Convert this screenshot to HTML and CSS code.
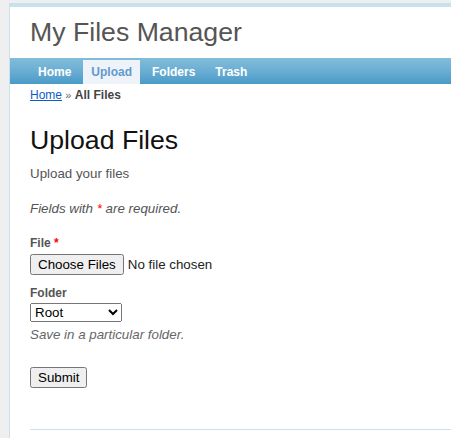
FILE: index.html
```html
<!DOCTYPE html>
<html lang="en">
<head>
<meta charset="utf-8">
<title>My Files Manager - Upload Files</title>
<link rel="stylesheet" href="styles.css">
</head>
<body>
<div class="page">
  <header class="header">
    <div class="logo">My Files Manager</div>
  </header>
  <nav class="mainmenu">
    <ul>
      <li><a href="#">Home</a></li>
      <li class="active"><a href="#">Upload</a></li>
      <li><a href="#">Folders</a></li>
      <li><a href="#">Trash</a></li>
    </ul>
  </nav>
  <div class="breadcrumbs"><a href="#">Home</a> <span class="sep">&raquo;</span> <span class="current">All Files</span></div>
  <main class="content">
    <h1>Upload Files</h1>
    <p class="intro">Upload your files</p>
    <form class="form" action="#" onsubmit="return false;">
      <p class="note">Fields with <span class="required">*</span> are required.</p>
      <div class="row">
        <label class="field-label" for="files">File <span class="required">*</span></label>
        <input class="file-input" id="files" type="file" multiple>
      </div>
      <div class="row row-folder">
        <label class="field-label" for="folder">Folder</label>
        <select class="folder-select" id="folder">
          <option>Root</option>
        </select>
        <div class="hint">Save in a particular folder.</div>
      </div>
      <div class="row buttons">
        <input class="submit-btn" type="submit" value="Submit">
      </div>
    </form>
  </main>
  <footer class="footer"></footer>
</div>
</body>
</html>
```

FILE: styles.css
```css
html, body {
  margin: 0;
  padding: 0;
}

body {
  background: #efefef;
  color: #555;
  font-family: "Liberation Sans", Arial, Helvetica, sans-serif;
  font-size: 13.333px;
  overflow: hidden;
}

.page {
  margin: 3px 0 0 9px;
  background: #fff;
  border-top: 1px solid #c9e0ed;
  border-left: 1px solid #c9e0ed;
}

.header {
  border-top: 3px solid #c9e0ed;
}

.logo {
  padding: 10px 20px;
  font-size: 26.667px;
  line-height: 31px;
  color: #555;
}

.mainmenu {
  background: linear-gradient(to bottom, #82bcda 0%, #6aaed3 50%, #4a9ac8 100%);
  height: 26px;
}

.mainmenu ul {
  list-style: none;
  margin: 0;
  padding: 2px 20px 0 20px;
  display: flex;
  gap: 4px;
}

.mainmenu a {
  display: block;
  padding: 5px 8px;
  font-size: 12px;
  line-height: 14px;
  font-weight: bold;
  color: #fff;
  text-decoration: none;
}

.mainmenu .active a {
  background: #eef3fa;
  color: #6399cd;
}

.breadcrumbs {
  padding: 3px 20px;
  font-size: 12px;
  line-height: 16px;
}

.breadcrumbs a {
  color: #0b5cc9;
}

.breadcrumbs .sep {
  font-size: 11px;
  color: #666;
}

.breadcrumbs .current {
  font-weight: bold;
  color: #444;
}

.content {
  padding: 0 20px;
}

h1 {
  margin: 19px 0 0;
  font-size: 26.667px;
  line-height: 31px;
  font-weight: normal;
  color: #111;
}

.intro {
  margin: 8px 0 0;
  line-height: 20px;
}

.form {
  margin: 0;
}

.note {
  margin: 15px 0 0;
  line-height: 20px;
  font-style: italic;
}

.required {
  color: #f00;
  font-style: normal;
}

.note .required {
  font-style: italic;
}

.row {
  margin-top: 16px;
}

.row-folder {
  margin-top: 10px;
}

.field-label {
  display: block;
  font-size: 12px;
  line-height: 16px;
  font-weight: bold;
  color: #555;
}

.file-input {
  display: block;
  margin: 3px 0 0;
  font-family: "Liberation Sans", Arial, sans-serif;
  font-size: 13.333px;
  color: #222;
}

.folder-select {
  display: block;
  margin: 2px 0 0;
  width: 92px;
  height: 19px;
  font-family: "Liberation Sans", Arial, sans-serif;
  font-size: 13.333px;
  color: #000;
}

.hint {
  margin-top: 3px;
  line-height: 20px;
  font-style: italic;
  color: #666;
}

.buttons {
  margin-top: 22px;
}

.submit-btn {
  display: block;
  margin: 0;
  font-family: "Liberation Sans", Arial, sans-serif;
  font-size: 13.333px;
  color: #000;
}

.footer {
  margin: 41px 0 0 20px;
  border-top: 1px solid #c9e0ed;
  height: 8px;
}
```
